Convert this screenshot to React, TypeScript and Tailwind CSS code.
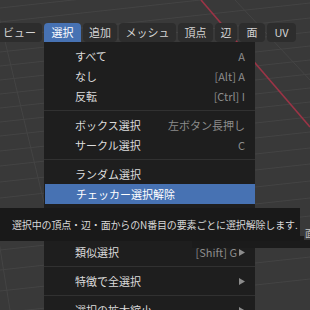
import React from "react";

const FONT = { fontFamily: '"Noto Sans CJK JP", "Noto Sans", sans-serif' };

function Arrow() {
  return (
    <svg width="6" height="7" viewBox="0 0 6 7" className="ml-[2px]">
      <path d="M0 0 L6 3.5 L0 7 Z" fill="#8c8c8c" />
    </svg>
  );
}

type Item =
  | { kind: "sep" }
  | { kind: "item"; label: string; shortcut?: string; sub?: boolean; active?: boolean };

const items: Item[] = [
  { kind: "item", label: "すべて", shortcut: "A" },
  { kind: "item", label: "なし", shortcut: "[Alt] A" },
  { kind: "item", label: "反転", shortcut: "[Ctrl] I" },
  { kind: "sep" },
  { kind: "item", label: "ボックス選択", shortcut: "左ボタン長押し" },
  { kind: "item", label: "サークル選択", shortcut: "C" },
  { kind: "sep" },
  { kind: "item", label: "ランダム選択" },
  { kind: "item", label: "チェッカー選択解除", active: true },
  { kind: "sep" },
  { kind: "item", label: "シャープエッジ選択" },
  { kind: "sep" },
  { kind: "item", label: "類似選択", shortcut: "[Shift] G", sub: true },
  { kind: "sep" },
  { kind: "item", label: "特徴で全選択", sub: true },
  { kind: "sep" },
  { kind: "item", label: "選択の拡大縮小", sub: true },
];

const headerButtons = [
  { label: "ビュー", w: "w-[45px]" },
  { label: "選択", w: "w-[37px]", active: true },
  { label: "追加", w: "w-[34px]" },
  { label: "メッシュ", w: "w-[57px]" },
  { label: "頂点", w: "w-[35px]" },
  { label: "辺", w: "w-[22px]" },
  { label: "面", w: "w-[26px]" },
  { label: "UV", w: "w-[29px]" },
];

function Grid() {
  const ys = [4, 18, 33, 48, 62, 76, 90, 104, 118, 132, 147, 162, 178, 194, 211, 228, 246, 266, 287, 309];
  return (
    <svg className="absolute inset-0" width="310" height="310" viewBox="0 0 310 310">
      {ys.map((y, i) => (
        <line key={i} x1="0" y1={y + 4} x2="310" y2={y - 30} stroke="#444444" strokeWidth="1" />
      ))}
      <line x1="-5" y1="0" x2="70" y2="310" stroke="#444444" strokeWidth="1" />
      <line x1="-40" y1="0" x2="10" y2="310" stroke="#444444" strokeWidth="1" />
      <line x1="235" y1="0" x2="310" y2="80" stroke="#444444" strokeWidth="1" />
      <line x1="201" y1="0" x2="310" y2="127" stroke="#9b3446" strokeWidth="1.6" />
    </svg>
  );
}

export default function App() {
  return (
    <div className="relative w-[310px] h-[310px] overflow-hidden bg-[#393939]" style={FONT}>
      <Grid />

      {/* Header */}
      <div className="relative flex gap-[2px] pt-[23px] ml-[-3px]">
        {headerButtons.map((b) => (
          <div
            key={b.label}
            className={`${b.w} h-[19px] flex items-center justify-center text-[11px] leading-none ${
              b.active
                ? "bg-[#4772b3] text-white rounded-t-[4px]"
                : "bg-[#2d2d2d] text-[#d4d4d4] rounded-[4px]"
            }`}
          >
            {b.label}
          </div>
        ))}
      </div>

      {/* Dropdown menu */}
      <div className="absolute left-[44px] top-[42px] w-[211px] bg-[#1e1e1e] pt-[4px] pb-[4px]">
        {items.map((it, i) =>
          it.kind === "sep" ? (
            <div key={i} className="h-[9px] flex items-center">
              <div className="h-px w-full bg-[#313131]" />
            </div>
          ) : (
            <div
              key={i}
              className={`h-[20px] flex items-center justify-between pl-[31px] pr-[10px] text-[11px] leading-none ${
                it.active ? "bg-[#4772b3] ml-[1px] text-white" : "text-[#dcdcdc]"
              }`}
            >
              <span>{it.label}</span>
              <span className="flex items-center text-[11px] text-[#8c8c8c]">
                {it.shortcut}
                {it.sub && <Arrow />}
              </span>
            </div>
          )
        )}
      </div>

      {/* tooltip shadow / panel edge */}
      <div className="absolute left-[192px] top-[236px] w-[118px] h-[12px] bg-[#1b1b1b]" />
      <div className="absolute left-[304px] top-[228px] w-[10px] h-[12px] bg-[#3a3a3a] overflow-hidden text-[9px] leading-[12px] text-[#c8c8c8] pl-[1px]">
        面
      </div>

      {/* Tooltip */}
      <div className="absolute left-0 top-[208px] w-[300px] h-[33px] bg-[#191919] flex items-center pl-[12px] text-[10px] tracking-[-0.15px] text-[#d8d8d8] leading-none whitespace-nowrap">
        選択中の頂点・辺・面からのN番目の要素ごとに選択解除します.
      </div>
    </div>
  );
}
